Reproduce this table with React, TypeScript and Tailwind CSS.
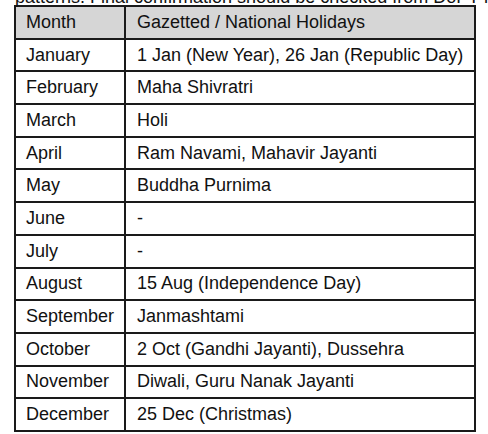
import React from "react";

const rows: [string, string][] = [
  ["January", "1 Jan (New Year), 26 Jan (Republic Day)"],
  ["February", "Maha Shivratri"],
  ["March", "Holi"],
  ["April", "Ram Navami, Mahavir Jayanti"],
  ["May", "Buddha Purnima"],
  ["June", "-"],
  ["July", "-"],
  ["August", "15 Aug (Independence Day)"],
  ["September", "Janmashtami"],
  ["October", "2 Oct (Gandhi Jayanti), Dussehra"],
  ["November", "Diwali, Guru Nanak Jayanti"],
  ["December", "25 Dec (Christmas)"],
];

export default function App() {
  return (
    <div
      className="w-[488px] h-[434px] overflow-hidden bg-white text-[#111]"
      style={{ fontFamily: '"Liberation Sans", Arial, sans-serif' }}
    >
      <p className="mt-[-13px] ml-[15px] whitespace-nowrap text-[18px] leading-[20px]">
        patterns. Final confirmation should be checked from DoPT notification.
      </p>
      <table className="ml-[14px] mt-[-2px] w-[462px] border-collapse border-2 border-[#1a1a1a] text-[18px]">
        <thead>
          <tr className="h-[32.7px] bg-[#d6d6d6]">
            <th className="w-[110px] border-2 border-[#1a1a1a] pl-[10px] text-left font-normal">Month</th>
            <th className="border-2 border-[#1a1a1a] pl-[11px] text-left font-normal">Gazetted / National Holidays</th>
          </tr>
        </thead>
        <tbody>
          {rows.map(([m, h]) => (
            <tr key={m} className="h-[32.7px]">
              <td className="border-2 border-[#1a1a1a] pl-[10px] whitespace-nowrap">{m}</td>
              <td className="border-2 border-[#1a1a1a] pl-[11px] whitespace-nowrap">{h}</td>
            </tr>
          ))}
        </tbody>
      </table>
    </div>
  );
}
